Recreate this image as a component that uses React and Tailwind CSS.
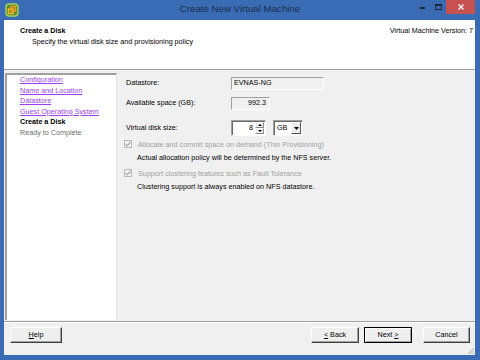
const navItems = [
    { label: "Configuration", state: "link" },
    { label: "Name and Location", state: "link" },
    { label: "Datastore", state: "link" },
    { label: "Guest Operating System", state: "link" },
    { label: "Create a Disk", state: "current" },
    { label: "Ready to Complete", state: "todo" },
];

const sunken = "border border-t-[#a0a0a0] border-l-[#a0a0a0] border-b-white border-r-white";

const WinButton = ({ children, width, isDefault }) => (
    <div
        className={`h-[16px] ${width} flex items-center justify-center bg-[#efefef] text-[7.2px] text-black ${
            isDefault
                ? "border border-black shadow-[inset_1px_1px_0_#fff,inset_-1px_-1px_0_#a0a0a0]"
                : "border border-t-white border-l-white border-b-[#404040] border-r-[#404040] shadow-[inset_-1px_-1px_0_#a0a0a0]"
        }`}
    >
        {children}
    </div>
);

const DisabledCheck = () => (
    <div className="w-[8px] h-[8px] border border-[#b8b8b8] bg-[#f4f4f4] flex items-center justify-center">
        <svg width="6" height="6" viewBox="0 0 6 6">
            <path d="M0.5 3 L2.3 4.8 L5.5 1" stroke="#a8a8a8" strokeWidth="1.2" fill="none" />
        </svg>
    </div>
);

const App = () => {
    return (
        <div className="w-[480px] h-[360px] bg-[#3a6cb6] flex flex-col font-['Liberation_Sans',Arial,sans-serif] overflow-hidden">
            {/* title bar */}
            <div className="h-[20px] relative flex items-center justify-center">
                <svg className="absolute left-[5px] top-[3px]" width="14" height="14" viewBox="0 0 14 14">
                    <rect x="1" y="1" width="12" height="12" rx="3" fill="#5d8a2e" stroke="#a4d45a" strokeWidth="1.4" />
                    <rect x="3.5" y="6" width="4.5" height="4.5" fill="none" stroke="#f6b92b" strokeWidth="1.5" />
                    <rect x="6" y="3.5" width="4.5" height="4.5" fill="none" stroke="#f39a1e" strokeWidth="1.5" />
                </svg>
                <span className="text-[9.7px] text-[#1c2c46] -mt-[1px]">Create New Virtual Machine</span>
                <div className="absolute right-[5px] top-0 flex items-start">
                    <div className="w-[14px] h-[13px] flex items-center justify-center">
                        <div className="w-[5px] h-[1.5px] bg-[#1c2636] mt-[3px]" />
                    </div>
                    <div className="w-[14px] h-[13px] flex items-center justify-center ml-[2px]">
                        <div className="w-[7px] h-[6px] border border-t-2 border-[#1c2636]" />
                    </div>
                    <div className="w-[29px] h-[14px] bg-[#c75050] flex items-center justify-center ml-[1px]">
                        <svg width="6" height="6" viewBox="0 0 6 6">
                            <path d="M0.5 0.5 L5.5 5.5 M5.5 0.5 L0.5 5.5" stroke="#fff" strokeWidth="1.3" />
                        </svg>
                    </div>
                </div>
            </div>

            {/* client area */}
            <div className="flex-1 ml-[4px] mr-[5px] mb-[5px] bg-[#f0f0f0] flex flex-col">
                <div className="h-[50px] bg-white border-b border-[#a0a0a0] flex justify-between pl-[16px] pr-[2px] pt-[5px] text-[7.2px] leading-[11px] text-black">
                    <div>
                        <div className="font-bold">Create a Disk</div>
                        <div className="pl-[12px]">Specify the virtual disk size and provisioning policy</div>
                    </div>
                    <div>Virtual Machine Version: 7</div>
                </div>

                <div className="h-[250px] flex pt-[3px] pl-[1px]">
                    <div className="w-[112px] h-full bg-white border-l-2 border-t-2 border-[#a0a0a0] border-r border-r-[#e3e3e3] pl-[13px] text-[7.2px] leading-[10.6px]">
                        {navItems.map((item) => (
                            <div
                                key={item.label}
                                className={
                                    item.state === "link"
                                        ? "text-[#9b3ff0] underline"
                                        : item.state === "current"
                                        ? "font-bold text-black"
                                        : "text-[#6d6d6d]"
                                }
                            >
                                {item.label}
                            </div>
                        ))}
                    </div>

                    <div className="flex-1 pl-[9px] pt-[4px] text-[7.2px] text-black">
                        <div className="h-[13px] flex items-center">
                            <span className="w-[105px]">Datastore:</span>
                            <div className={`w-[93px] h-[13px] ${sunken} bg-[#f0f0f0] flex items-center pl-[2px]`}>EVNAS-NG</div>
                        </div>
                        <div className="h-[13px] flex items-center mt-[7px]">
                            <span className="w-[105px]">Available space (GB):</span>
                            <div className={`w-[39px] h-[13px] ${sunken} bg-[#f0f0f0] flex items-center justify-end pr-[3px]`}>992.3</div>
                        </div>
                        <div className="h-[16px] flex items-center mt-[10px]">
                            <span className="w-[105px]">Virtual disk size:</span>
                            <div className="w-[35px] h-[16px] border border-[#a0a0a0] border-b-white border-r-white shadow-[inset_1px_1px_0_#696969] bg-white flex items-center">
                                <span className="flex-1 text-right pr-[2px]">8</span>
                                <div className="w-[9px] h-[12px] flex flex-col mr-[1px]">
                                    <div className="flex-1 bg-[#ececec] border border-t-white border-l-white border-b-[#888] border-r-[#888] flex items-center justify-center">
                                        <svg width="4" height="2" viewBox="0 0 4 2"><path d="M0 2 L2 0 L4 2Z" fill="#000" /></svg>
                                    </div>
                                    <div className="flex-1 bg-[#ececec] border border-t-white border-l-white border-b-[#888] border-r-[#888] flex items-center justify-center">
                                        <svg width="4" height="2" viewBox="0 0 4 2"><path d="M0 0 L2 2 L4 0Z" fill="#000" /></svg>
                                    </div>
                                </div>
                            </div>
                            <div className="w-[30px] h-[16px] ml-[7px] border border-[#a0a0a0] border-b-white border-r-white shadow-[inset_1px_1px_0_#696969] bg-white flex items-center">
                                <span className="flex-1 pl-[3px]">GB</span>
                                <div className="w-[10px] h-[12px] mr-[1px] bg-[#ececec] border border-t-white border-l-white border-b-[#555] border-r-[#555] flex items-center justify-center">
                                    <svg width="5" height="3" viewBox="0 0 5 3"><path d="M0 0 L2.5 3 L5 0Z" fill="#000" /></svg>
                                </div>
                            </div>
                        </div>

                        <div className="mt-[1.5px] -ml-[2px] leading-[13px]">
                            <div className="flex items-center h-[13px]">
                                <DisabledCheck />
                                <span className="ml-[6px] text-[#a0a0a0]">Allocate and commit space on demand (Thin Provisioning)</span>
                            </div>
                            <div className="pl-[13px] h-[13px]">Actual allocation policy will be determined by the NFS server.</div>
                            <div className="flex items-center h-[13px] mt-[3px]">
                                <DisabledCheck />
                                <span className="ml-[6px] text-[#a0a0a0]">Support clustering features such as Fault Tolerance</span>
                            </div>
                            <div className="pl-[13px] h-[13px]">Clustering support is always enabled on NFS datastore.</div>
                        </div>
                    </div>
                </div>

                <div className="mt-[1px] border-t border-[#a0a0a0] border-b border-b-white" />

                <div className="flex-1 flex items-start pt-[4px] pl-[6px] pr-[5px] relative">
                    <WinButton width="w-[52px]">
                        <span><span className="underline">H</span>elp</span>
                    </WinButton>
                    <div className="flex-1" />
                    <WinButton width="w-[48px]">
                        <span><span className="underline">&lt;</span> Back</span>
                    </WinButton>
                    <div className="ml-[5px]">
                        <WinButton width="w-[48px]" isDefault>
                            <span>Next <span className="underline">&gt;</span></span>
                        </WinButton>
                    </div>
                    <div className="ml-[11px]">
                        <WinButton width="w-[47px]">Cancel</WinButton>
                    </div>
                    <svg className="absolute right-0 bottom-0" width="8" height="8" viewBox="0 0 8 8">
                        <path d="M7 1 L1 7 M7 3.5 L3.5 7 M7 6 L6 7" stroke="#a0a0a0" strokeWidth="0.8" />
                    </svg>
                </div>
            </div>
        </div>
    );
};

export default App;
